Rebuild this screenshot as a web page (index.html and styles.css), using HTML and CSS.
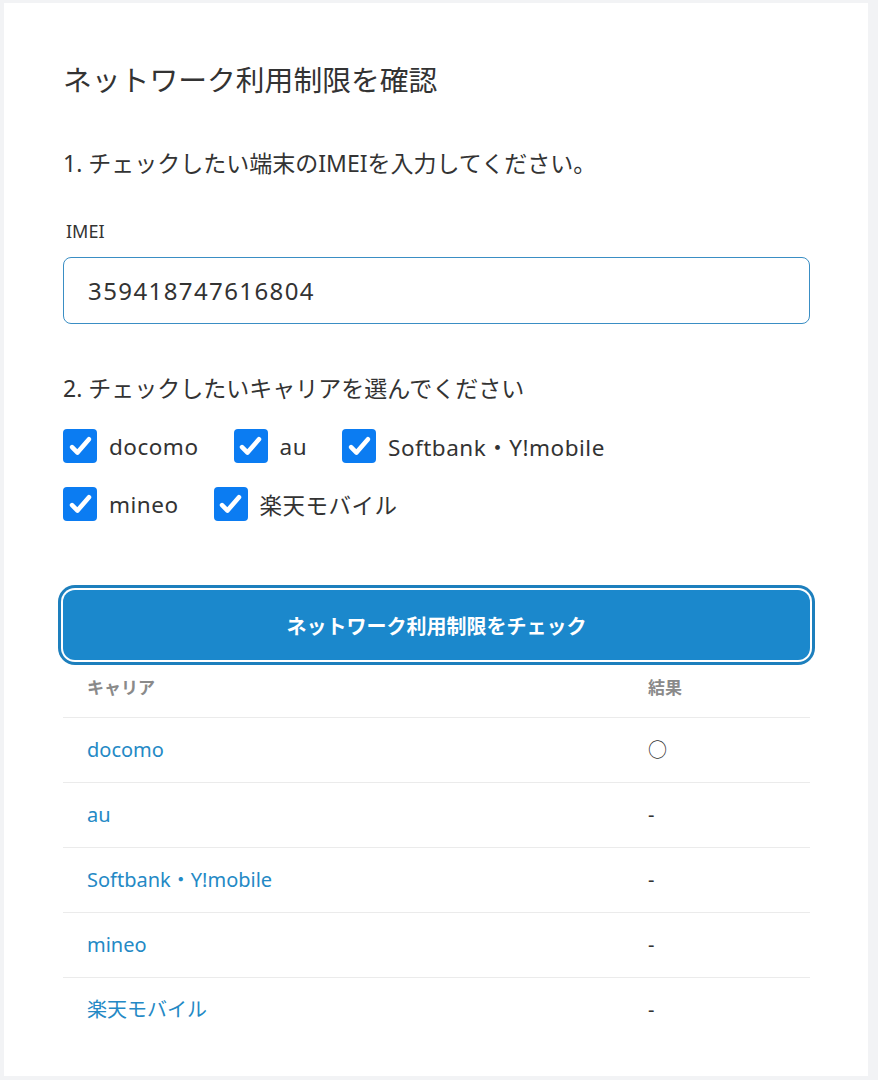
FILE: index.html
```html
<!DOCTYPE html>
<html lang="ja">
<head>
    <meta charset="UTF-8">
    <meta name="viewport" content="width=device-width, initial-scale=1.0">
    <title>ネットワーク利用制限を確認</title>
    <link rel="stylesheet" href="styles.css">
</head>
<body>
    <div class="card">
        <h2 class="title">ネットワーク利用制限を確認</h2>

        <p class="step step-1">1. チェックしたい端末のIMEIを入力してください。</p>
        <label class="field-label" for="imei">IMEI</label>
        <div class="input-box" id="imei">359418747616804</div>

        <p class="step step-2">2. チェックしたいキャリアを選んでください</p>
        <div class="carriers">
            <div class="carrier-row">
                <span class="check"><span class="box"><svg viewBox="0 0 24 24"><path d="M5 12.5l4.5 4.5L19 6"/></svg></span>docomo</span>
                <span class="check"><span class="box"><svg viewBox="0 0 24 24"><path d="M5 12.5l4.5 4.5L19 6"/></svg></span>au</span>
                <span class="check"><span class="box"><svg viewBox="0 0 24 24"><path d="M5 12.5l4.5 4.5L19 6"/></svg></span>Softbank・Y!mobile</span>
            </div>
            <div class="carrier-row">
                <span class="check"><span class="box"><svg viewBox="0 0 24 24"><path d="M5 12.5l4.5 4.5L19 6"/></svg></span>mineo</span>
                <span class="check"><span class="box"><svg viewBox="0 0 24 24"><path d="M5 12.5l4.5 4.5L19 6"/></svg></span>楽天モバイル</span>
            </div>
        </div>

        <button class="submit">ネットワーク利用制限をチェック</button>

        <table class="results">
            <thead>
                <tr><th class="col-carrier">キャリア</th><th>結果</th></tr>
            </thead>
            <tbody>
                <tr><td class="name">docomo</td><td class="mark">○</td></tr>
                <tr><td class="name">au</td><td>-</td></tr>
                <tr><td class="name">Softbank・Y!mobile</td><td>-</td></tr>
                <tr><td class="name">mineo</td><td>-</td></tr>
                <tr><td class="name">楽天モバイル</td><td>-</td></tr>
            </tbody>
        </table>
    </div>
</body>
</html>
```

FILE: styles.css
```css
body {
    margin: 0;
    padding: 3px 10px 4px 4px;
    background-color: #f2f3f5;
    font-family: "Noto Sans", "Noto Sans CJK JP", sans-serif;
    color: #333;
}
.card {
    background-color: #fff;
    padding: 57px 58px 34px 59px;
}
.title {
    margin: 0;
    font-size: 28.8px;
    font-weight: normal;
    line-height: 40px;
    color: #333;
}
.step {
    margin: 0;
    font-size: 23px;
    line-height: 32px;
}
.step-1 {
    margin-top: 47px;
}
.step-2 {
    margin-top: 48px;
}
.field-label {
    display: block;
    margin-top: 39px;
    padding-left: 3px;
    font-size: 18px;
    line-height: 26px;
}
.input-box {
    margin-top: 13px;
    box-sizing: border-box;
    height: 67px;
    border: 1px solid #3a8ec4;
    border-radius: 8px;
    padding-left: 24px;
    display: flex;
    align-items: center;
    font-size: 24px;
    letter-spacing: 1.4px;
    color: #333;
}
.carriers {
    margin-top: 22px;
    display: flex;
    flex-direction: column;
    gap: 18px;
}
.carrier-row {
    display: flex;
    gap: 35px;
    height: 40px;
    align-items: center;
}
.check {
    display: flex;
    align-items: center;
    gap: 12px;
    font-size: 22.5px;
    letter-spacing: 0.5px;
}
.box {
    width: 34px;
    height: 34px;
    border-radius: 4px;
    background-color: #0b7cf2;
    display: flex;
    align-items: center;
    justify-content: center;
}
.box svg {
    width: 29px;
    height: 29px;
    fill: none;
    stroke: #fff;
    stroke-width: 3.8;
    stroke-linecap: round;
    stroke-linejoin: round;
}
.submit {
    display: block;
    width: 100%;
    height: 70px;
    margin-top: 66px;
    border: none;
    border-radius: 12px;
    background-color: #1b88cc;
    color: #fff;
    font-family: inherit;
    font-size: 20px;
    font-weight: bold;
    box-shadow: 0 0 0 2px #fff, 0 0 0 5px #1d7fbd;
}
.results {
    width: 100%;
    border-collapse: collapse;
}
.results th {
    text-align: left;
    font-size: 17px;
    font-weight: bold;
    color: #8a8a8a;
    line-height: 24px;
    padding: 16px 24px 17px;
}
.results th.col-carrier {
    width: 513px;
}
.results td {
    border-top: 1px solid #ebebeb;
    padding: 20px 24px;
    line-height: 24px;
    font-size: 20px;
    color: #333;
}
.results td.name {
    color: #2489c5;
}
.results td.mark {
    font-size: 19px;
}
```
